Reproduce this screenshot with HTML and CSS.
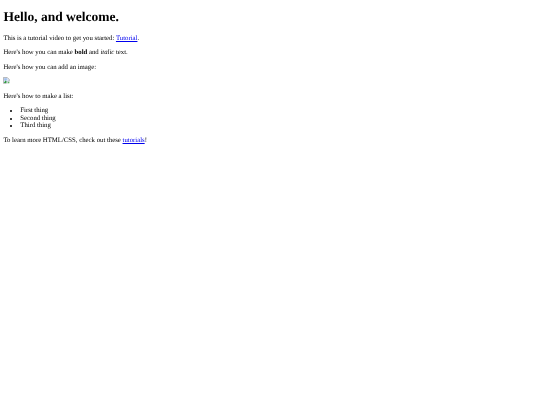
FILE: index.html
```html
<!DOCTYPE html>
<html lang="en">
<head>
    <meta charset="UTF-8">
    <title>Hello, and welcome.</title>
    <link rel="stylesheet" href="styles.css">
</head>
<body>
    <h1>Hello, and welcome.</h1>
    <p>This is a tutorial video to get you started: <a href="#">Tutorial</a>.</p>
    <p>Here's how you can make <b>bold</b> and <i>italic</i> text.</p>
    <p>Here's how you can add an image:</p>
    <p class="image-row">
        <svg class="broken-image" viewBox="0 0 16 16">
            <path d="M1 1H10L15 6V9L11 11L8 15H1Z" fill="#d8e4f6" stroke="#8f8f8f" stroke-width="1.4"/>
            <path d="M3 3H9V8H3Z" fill="#9dbdec"/>
            <path d="M2 14L6 8L9 11L7 14Z" fill="#2f9a3a"/>
            <path d="M10 15L15 10V15Z" fill="#3fa648"/>
        </svg>
    </p>
    <p>Here's how to make a list:</p>
    <ul>
        <li>First thing</li>
        <li>Second thing</li>
        <li>Third thing</li>
    </ul>
    <p>To learn more HTML/CSS, check out these <a href="#">tutorials</a>!</p>
</body>
</html>
```

FILE: styles.css
```css
body {
    margin: 3.4px;
    font-family: "Liberation Serif", serif;
    font-size: 6.75px;
    line-height: 7.6px;
    text-rendering: geometricPrecision;
    color: #000;
    background-color: #fff;
    filter: blur(0.2px);
}
h1 {
    font-size: 13.5px;
    line-height: 15.5px;
    margin: 6px 0 10px;
}
p {
    margin: 6.75px 0;
}
ul {
    margin: 6.75px 0;
    padding-left: 16.9px;
}
a {
    color: #0000ee;
}
.image-row {
    height: 8.75px;
}
.broken-image {
    display: block;
    width: 6.75px;
    height: 6.75px;
    margin-top: -0.7px;
}
```
